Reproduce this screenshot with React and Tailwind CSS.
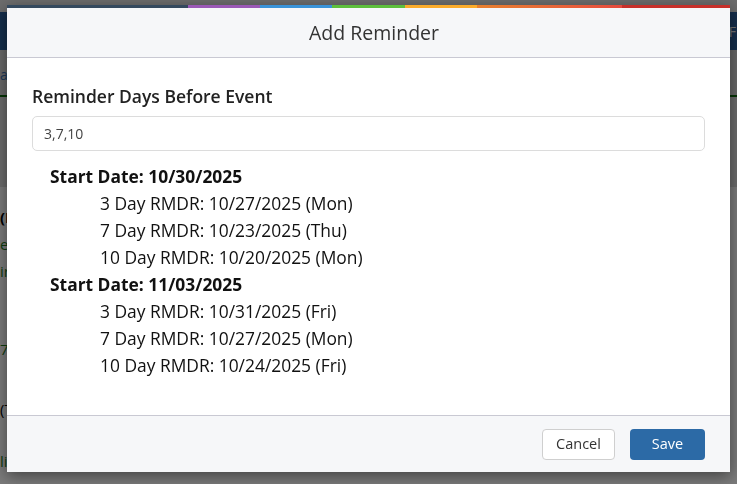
import { useState } from "react";

const stripe = [
  { w: "w-[181px]", c: "bg-[#34495e]" },
  { w: "w-[72px]", c: "bg-[#9b59b6]" },
  { w: "w-[72px]", c: "bg-[#3a93d8]" },
  { w: "w-[73px]", c: "bg-[#5dbf3c]" },
  { w: "w-[72px]", c: "bg-[#fbab2a]" },
  { w: "w-[145px]", c: "bg-gradient-to-r from-[#e8802e] to-[#e64a3e]" },
  { w: "w-[108px]", c: "bg-[#c7302b]" },
];

function addDays(date, n) {
  const d = new Date(date);
  d.setDate(d.getDate() - n);
  return d;
}

function fmt(d) {
  const mm = String(d.getMonth() + 1).padStart(2, "0");
  const dd = String(d.getDate()).padStart(2, "0");
  return `${mm}/${dd}/${d.getFullYear()}`;
}

const dayNames = ["Sun", "Mon", "Tue", "Wed", "Thu", "Fri", "Sat"];

export default function App() {
  const [days, setDays] = useState("3,7,10");
  const startDates = [new Date(2025, 9, 30), new Date(2025, 10, 3)];

  const list = days
    .split(",")
    .map((s) => parseInt(s.trim(), 10))
    .filter((n) => !isNaN(n));

  return (
    <div className="relative h-[484px] w-[737px] overflow-hidden bg-[#f4f4f4] font-['Open_Sans',sans-serif]">
      {/* page behind the dialog */}
      <div className="h-[12px] bg-[#d8d8d8]"></div>
      <div className="flex h-[38px] items-center justify-end bg-[#2a5c96] pr-[1px] text-[14px] text-[#e8e8e8]">
        <span>F</span>
      </div>
      <div className="h-[45px] bg-[#d0d0d0] pt-[14px] text-[14px] text-[#3a6fb0]">
        <span className="block w-[8px] overflow-hidden">a</span>
      </div>
      <div className="h-[2px] bg-[#0c6a0c]"></div>
      <div className="h-[90px] bg-[#d6d6d6]"></div>
      <div className="flex flex-col text-[15px] leading-[27px]">
        <span className="pt-[17px] font-bold text-black">(E</span>
        <span className="text-[#1e7a1e]">er</span>
        <span className="text-[#1e7a1e]">ir</span>
        <span className="mt-[51px] text-[#1e7a1e]">7,</span>
        <span className="mt-[33px] text-black">(T</span>
        <span className="mt-[25px] text-[#1e7a1e]">li</span>
      </div>

      {/* overlay */}
      <div className="fixed inset-0 flex justify-center bg-black/50 pt-[5px]">
        <div className="flex h-[467px] w-[723px] flex-col bg-white shadow-[0_4px_14px_rgba(0,0,0,0.45)]">
          <div className="flex h-[3px]">
            {stripe.map((s, i) => (
              <div key={i} className={`${s.w} ${s.c}`}></div>
            ))}
          </div>
          <div className="flex h-[50px] items-center justify-center border-b border-[#c9c9d3] bg-[#f6f7f9] pl-[11px] text-[19.5px] text-[#333]">
            Add Reminder
          </div>

          <div className="flex-1 px-[25px] pt-[25px]">
            <label className="block text-[17.5px] font-semibold leading-[26px] text-[#222]">
              Reminder Days Before Event
            </label>
            <input
              value={days}
              onChange={(e) => setDays(e.target.value)}
              className="mt-[7px] h-[35px] w-full rounded-[5px] border border-[#dcdcdc] px-[11px] text-[14px] text-[#444] outline-none"
            />

            <div className="mt-[12px] pl-[18px] text-[17.4px] leading-[27px] text-[#111]">
              {startDates.map((sd, i) => (
                <div key={i}>
                  <div className="font-bold">Start Date: {fmt(sd)}</div>
                  {list.map((n) => {
                    const r = addDays(sd, n);
                    return (
                      <div key={n} className="pl-[50px]">
                        {n} Day RMDR: {fmt(r)} ({dayNames[r.getDay()]})
                      </div>
                    );
                  })}
                </div>
              ))}
            </div>
          </div>

          <div className="flex h-[57px] items-center justify-end gap-[15px] border-t border-[#c9c9d3] bg-[#f6f7f9] px-[25px]">
            <button className="h-[31px] w-[73px] rounded-[4px] border border-[#cfcfcf] bg-white text-[14.5px] text-[#333]">
              Cancel
            </button>
            <button className="h-[31px] w-[75px] rounded-[4px] bg-[#2c6aa6] text-[14.5px] text-white">
              Save
            </button>
          </div>
        </div>
      </div>
    </div>
  );
}
